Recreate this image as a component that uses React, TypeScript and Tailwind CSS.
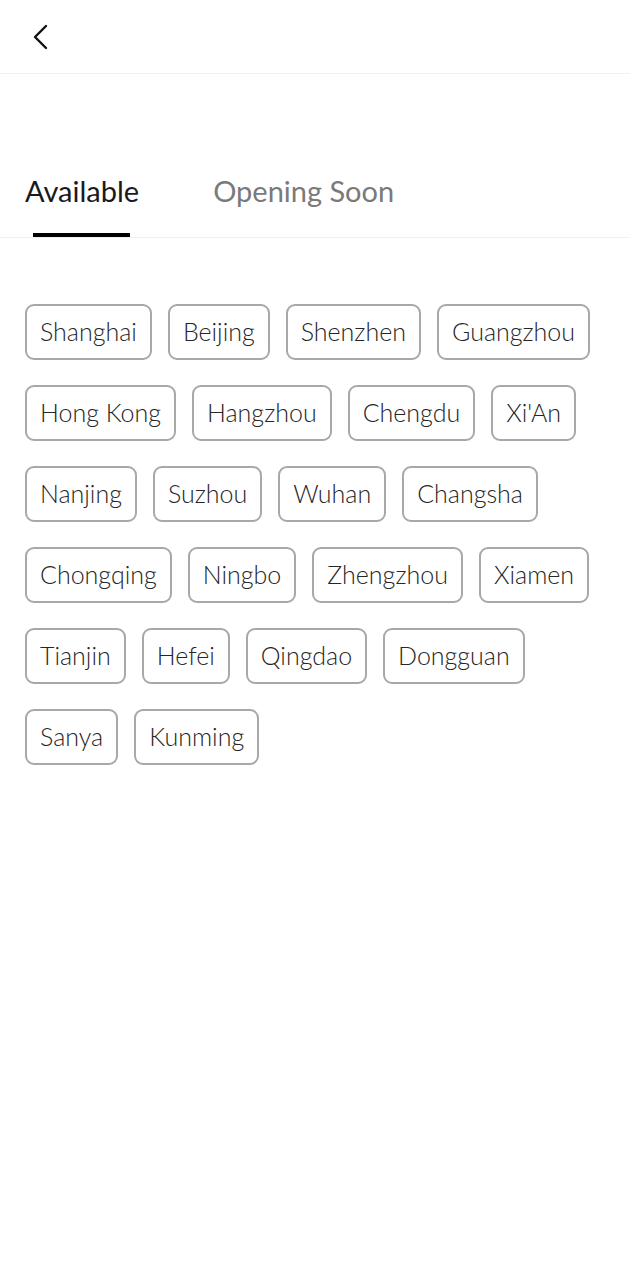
import React, { useState } from 'react';

const rows = [
  ['Shanghai', 'Beijing', 'Shenzhen', 'Guangzhou'],
  ['Hong Kong', 'Hangzhou', 'Chengdu', "Xi'An"],
  ['Nanjing', 'Suzhou', 'Wuhan', 'Changsha'],
  ['Chongqing', 'Ningbo', 'Zhengzhou', 'Xiamen'],
  ['Tianjin', 'Hefei', 'Qingdao', 'Dongguan'],
  ['Sanya', 'Kunming'],
];

export default function App() {
  const [tab, setTab] = useState<'available' | 'soon'>('available');

  return (
    <div className="min-h-[1280px] bg-white" style={{ fontFamily: 'Lato, "Noto Sans", sans-serif' }}>
      {/* Top bar */}
      <div className="h-[74px] flex items-center px-[31px] border-b border-[#f2f2f2]">
        <svg width="18" height="26" viewBox="0 0 18 26" fill="none" stroke="#111" strokeWidth="2.4" strokeLinecap="round" strokeLinejoin="round">
          <path d="M15 2L4 13l11 11" />
        </svg>
      </div>

      {/* Tabs */}
      <div className="mt-[99px] flex gap-[74px] px-[25px] border-b border-[#f0f0f0]">
        <button onClick={() => setTab('available')} className="relative pb-[28px] text-[29px] leading-[36px] text-[#1a1a1a]">
          Available
          {tab === 'available' && <span className="absolute left-[8px] right-[9px] bottom-0 h-[4px] bg-black" />}
        </button>
        <button onClick={() => setTab('soon')} className="relative pb-[28px] text-[29px] leading-[36px] text-[#7a7a7a]">
          Opening Soon
          {tab === 'soon' && <span className="absolute left-[8px] right-[9px] bottom-0 h-[4px] bg-black" />}
        </button>
      </div>

      {/* Cities */}
      <div className="flex flex-col gap-[25px] px-[25px] pt-[66px]">
        {tab === 'available' && rows.map((row, i) => (
          <div key={i} className="flex gap-[16px]">
            {row.map(city => (
              <div key={city} className="h-[56px] px-[13px] flex items-center rounded-[9px] border-2 border-[#a8a8a8] text-[25px] font-light text-[#262626]">
                {city}
              </div>
            ))}
          </div>
        ))}
      </div>
    </div>
  );
}
